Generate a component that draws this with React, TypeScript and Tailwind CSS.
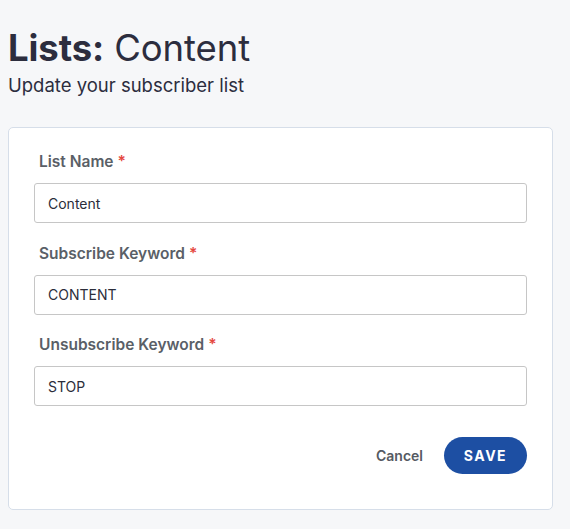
import React from "react";

const font = { fontFamily: "Inter, 'Noto Sans', sans-serif" };

function Field({ label, value }: { label: string; value: string }) {
  return (
    <div className="flex flex-col">
      <label className="px-[5px] text-[15.5px] leading-6 font-semibold text-[#5a5f67]">
        {label}
        <span className="text-[#e5483f] ml-[4px]">*</span>
      </label>
      <input
        readOnly
        value={value}
        className="mt-[9px] h-10 w-full rounded-[3px] border border-[#c6c6c6] bg-white px-[13px] text-[14px] text-[#2b2d3a] outline-none"
      />
    </div>
  );
}

export default function App() {
  return (
    <div className="min-h-[529px] w-full bg-[#f6f7f9] px-2 pt-[24px] pb-5" style={font}>
      <h1 className="text-[36.5px] leading-[48px] text-[#2c2d3e] tracking-[-0.1px]">
        <span className="font-bold">Lists:</span> Content
      </h1>
      <p className="text-[18.5px] leading-6 text-[#2c2d3e] mt-[1px]">Update your subscriber list</p>
      <div className="mt-[30px] w-[545px] rounded-[5px] border border-[#d6dee9] bg-white px-[25px] pt-[22px] pb-[35px]">
        <div className="flex flex-col gap-[18.5px]">
          <Field label="List Name" value="Content" />
          <Field label="Subscribe Keyword" value="CONTENT" />
          <Field label="Unsubscribe Keyword" value="STOP" />
        </div>
        <div className="mt-[31px] flex items-center justify-end gap-[21px]">
          <button className="text-[14px] font-semibold text-[#555a62]">Cancel</button>
          <button className="h-[37px] w-[83px] rounded-full bg-[#1d4fa3] text-[14px] font-bold tracking-[1.5px] text-white">
            SAVE
          </button>
        </div>
      </div>
    </div>
  );
}
